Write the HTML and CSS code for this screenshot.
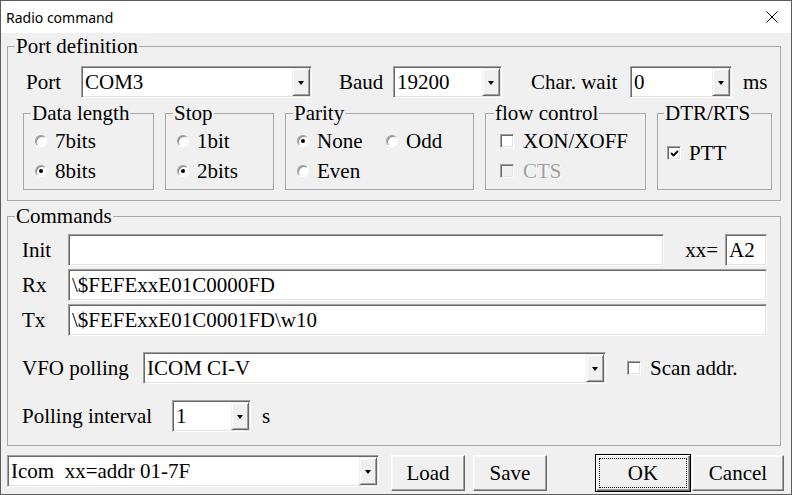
FILE: index.html
```html
<!DOCTYPE html>
<html lang="en">
<head>
  <meta charset="UTF-8">
  <title>Radio command</title>
  <link rel="stylesheet" href="styles.css">
</head>
<body>
  <div class="window">
    <div class="titlebar">
      <span class="title">Radio command</span>
      <svg class="close" width="12" height="12" viewBox="0 0 12 12">
        <path d="M0.5 0.5 L11.5 11.5 M11.5 0.5 L0.5 11.5" stroke="#000" stroke-width="1"/>
      </svg>
    </div>

    <div class="dialog">
      <!-- port settings -->
      <fieldset class="group port-def">
        <legend>Port definition</legend>
        <div class="port-row">
          <span class="lbl lbl-port">Port</span>
          <div class="combo combo-port"><span class="value">COM3</span><span class="arrow"></span></div>
          <span class="lbl lbl-baud">Baud</span>
          <div class="combo combo-baud"><span class="value">19200</span><span class="arrow"></span></div>
          <span class="lbl lbl-wait">Char. wait</span>
          <div class="combo combo-wait"><span class="value">0</span><span class="arrow"></span></div>
          <span class="lbl unit-ms">ms</span>
        </div>

        <div class="sub-row">
          <fieldset class="sub sub-data">
            <legend>Data length</legend>
            <div class="opt"><span class="radio"></span><span>7bits</span></div>
            <div class="opt"><span class="radio on"></span><span>8bits</span></div>
          </fieldset>
          <fieldset class="sub sub-stop">
            <legend>Stop</legend>
            <div class="opt"><span class="radio"></span><span>1bit</span></div>
            <div class="opt"><span class="radio on"></span><span>2bits</span></div>
          </fieldset>
          <fieldset class="sub sub-parity">
            <legend>Parity</legend>
            <div class="parity-grid">
              <div class="opt"><span class="radio on"></span><span>None</span></div>
              <div class="opt"><span class="radio"></span><span>Odd</span></div>
              <div class="opt"><span class="radio"></span><span>Even</span></div>
            </div>
          </fieldset>
          <fieldset class="sub sub-flow">
            <legend>flow control</legend>
            <div class="opt"><span class="check"></span><span>XON/XOFF</span></div>
            <div class="opt disabled"><span class="check"></span><span>CTS</span></div>
          </fieldset>
          <fieldset class="sub sub-dtr">
            <legend>DTR/RTS</legend>
            <div class="opt ptt">
              <span class="check">
                <svg width="9" height="9" viewBox="0 0 9 9"><path d="M1 4 L3.5 6.5 L8 2" fill="none" stroke="#000" stroke-width="1.8"/></svg>
              </span>
              <span>PTT</span>
            </div>
          </fieldset>
        </div>
      </fieldset>

      <!-- command strings -->
      <fieldset class="group commands">
        <legend>Commands</legend>
        <div class="cmd-row">
          <span class="lbl cmd-lbl">Init</span>
          <div class="field field-init"></div>
          <span class="lbl lbl-xx">xx=</span>
          <div class="field field-xx">A2</div>
        </div>
        <div class="cmd-row">
          <span class="lbl cmd-lbl">Rx</span>
          <div class="field field-wide">\$FEFExxE01C0000FD</div>
        </div>
        <div class="cmd-row">
          <span class="lbl cmd-lbl">Tx</span>
          <div class="field field-wide">\$FEFExxE01C0001FD\w10</div>
        </div>

        <div class="vfo-row">
          <span class="lbl lbl-vfo">VFO polling</span>
          <div class="combo combo-vfo"><span class="value">ICOM CI-V</span><span class="arrow"></span></div>
          <span class="check scan-check"></span>
          <span class="lbl">Scan addr.</span>
        </div>
        <div class="poll-row">
          <span class="lbl lbl-poll">Polling interval</span>
          <div class="combo combo-poll"><span class="value">1</span><span class="arrow"></span></div>
          <span class="lbl unit-s">s</span>
        </div>
      </fieldset>

      <div class="bottom-bar">
        <div class="combo combo-preset"><span class="value">Icom  xx=addr 01-7F</span><span class="arrow"></span></div>
        <div class="btn btn-load">Load</div>
        <div class="btn btn-save">Save</div>
        <div class="btn btn-ok">OK</div>
        <div class="btn btn-cancel">Cancel</div>
      </div>
    </div>
  </div>
</body>
</html>
```

FILE: styles.css
```css
* {
  box-sizing: border-box;
}

html, body {
  margin: 0;
  padding: 0;
  overflow: hidden;
  background: #f0f0f0;
}

.window {
  width: 792px;
  height: 495px;
  border: 1px solid #5c5c5c;
  background: #f0f0f0;
  font-family: "Liberation Serif", "Times New Roman", serif;
  font-size: 21px;
  color: #000;
}

.titlebar {
  height: 32px;
  background: #fff;
  display: flex;
  align-items: center;
  justify-content: space-between;
  padding: 0 13px 0 5px;
}

.title {
  font-family: "Noto Sans", "Open Sans", sans-serif;
  font-size: 14px;
  color: #000;
}

.dialog {
  padding: 2px 0 0 6px;
}

/* group boxes */
fieldset {
  margin: 0;
  min-width: 0;
  border: 1px solid #a8a8a8;
}

legend {
  line-height: 22px;
  padding: 0 1px;
}

.group {
  width: 774px;
}

.port-def {
  padding: 9px 0 10px 15px;
}

.port-def > legend {
  margin-left: -8px;
}

.commands {
  margin-top: 4px;
  padding: 7px 0 13px 14px;
}

.commands > legend {
  margin-left: -7px;
}

/* generic widgets */
.lbl {
  white-space: nowrap;
}

.combo {
  height: 32px;
  display: flex;
  background: #fff;
  border: 1px solid;
  border-color: #a0a0a0 #fff #fff #a0a0a0;
  box-shadow: inset 1px 1px 0 #696969, inset -1px -1px 0 #e3e3e3;
  padding: 1px;
}

.combo .value {
  flex: 1;
  padding-left: 2px;
  line-height: 28px;
  white-space: pre;
}

.combo .arrow {
  width: 18px;
  background: #f0f0f0;
  border: 1px solid;
  border-color: #f0f0f0 #696969 #696969 #f0f0f0;
  box-shadow: inset 1px 1px 0 #fff, inset -1px -1px 0 #a0a0a0;
  display: flex;
  align-items: center;
  justify-content: center;
}

.combo .arrow::after {
  content: "";
  border-left: 3.5px solid transparent;
  border-right: 3.5px solid transparent;
  border-top: 4px solid #000;
  margin-top: 1px;
}

.field {
  height: 32px;
  background: #fff;
  border: 1px solid;
  border-color: #a0a0a0 #fff #fff #a0a0a0;
  box-shadow: inset 1px 1px 0 #696969, inset -1px -1px 0 #e3e3e3;
  padding: 0 3px;
  line-height: 30px;
  white-space: nowrap;
}

.radio {
  width: 12px;
  height: 12px;
  flex: none;
  border-radius: 50%;
  background: #fff;
  border: 1px solid;
  border-color: #a0a0a0 #fff #fff #a0a0a0;
  box-shadow: inset 1px 1px 0 #8a8a8a;
  display: flex;
  align-items: center;
  justify-content: center;
}

.radio.on::after {
  content: "";
  width: 4px;
  height: 4px;
  border-radius: 50%;
  background: #000;
}

.check {
  width: 14px;
  height: 14px;
  flex: none;
  background: #fff;
  border: 1px solid;
  border-color: #a0a0a0 #fff #fff #a0a0a0;
  box-shadow: inset 1px 1px 0 #696969, inset -1px -1px 0 #e3e3e3;
  display: flex;
  align-items: center;
  justify-content: center;
}

/* port row */
.port-row {
  display: flex;
  align-items: center;
  height: 32px;
}

.lbl-port {
  width: 58px;
  padding-left: 3px;
}

.combo-port {
  width: 231px;
}

.lbl-baud {
  width: 81px;
  padding-left: 27px;
}

.combo-baud {
  width: 109px;
}

.lbl-wait {
  width: 128px;
  padding-left: 29px;
}

.combo-wait {
  width: 102px;
}

.unit-ms {
  margin-left: 11px;
}

/* small groups */
.sub-row {
  display: flex;
  gap: 11px;
  margin-top: 4px;
}

.sub {
  padding: 2px 0 3px 11px;
}

.sub > legend {
  margin-left: -4px;
}

.sub-data { width: 131px; }
.sub-stop { width: 109px; }
.sub-parity { width: 189px; }

.sub-flow {
  width: 161px;
  padding-left: 14px;
}

.sub-flow > legend {
  margin-left: -6px;
}

.sub-dtr {
  width: 115px;
  padding-left: 9px;
}

.sub-dtr > legend {
  margin-left: -3px;
}

.opt {
  height: 30px;
  display: flex;
  align-items: center;
  gap: 8px;
  white-space: nowrap;
}

.sub-flow .opt {
  gap: 9px;
}

.opt.disabled {
  color: #a0a0a0;
  text-shadow: 1px 1px 0 #fff;
}

.opt.disabled .check {
  background: #f0f0f0;
}

.opt.ptt {
  margin-top: 12px;
}

.parity-grid {
  display: grid;
  grid-template-columns: 89px auto;
}

/* commands */
.cmd-row {
  display: flex;
  align-items: center;
  height: 32px;
  margin-bottom: 3px;
  width: 745px;
}

.cmd-lbl {
  width: 46px;
}

.field-init {
  width: 596px;
}

.lbl-xx {
  flex: 1;
  text-align: right;
  padding-right: 7px;
}

.field-xx {
  width: 42px;
}

.field-wide {
  flex: 1;
}

.vfo-row {
  display: flex;
  align-items: center;
  margin-top: 16px;
}

.lbl-vfo {
  width: 121px;
}

.combo-vfo {
  width: 463px;
}

.scan-check {
  margin: 0 9px 0 21px;
}

.poll-row {
  display: flex;
  align-items: center;
  margin-top: 16px;
}

.lbl-poll {
  width: 150px;
}

.combo-poll {
  width: 79px;
}

.unit-s {
  margin-left: 11px;
}

/* bottom buttons */
.bottom-bar {
  display: flex;
  align-items: flex-start;
  margin-top: 9px;
}

.combo-preset {
  width: 372px;
}

.btn {
  height: 36px;
  display: flex;
  align-items: center;
  justify-content: center;
  background: #f0f0f0;
  border: 1px solid;
  border-color: #fff #696969 #696969 #fff;
  box-shadow: inset -1px -1px 0 #a0a0a0, inset 1px 1px 0 #f8f8f8;
}

.btn-load {
  width: 74px;
  margin-left: 12px;
}

.btn-save {
  width: 74px;
  margin-left: 8px;
}

.btn-ok {
  width: 96px;
  height: 38px;
  margin-left: 48px;
  margin-top: -1px;
  border-color: #000;
  box-shadow: inset 1px 1px 0 #fff, inset -1px -1px 0 #696969, inset -2px -2px 0 #a0a0a0;
  outline: 1px dotted #000;
  outline-offset: -5px;
}

.btn-cancel {
  width: 92px;
  margin-left: 1px;
}
```
